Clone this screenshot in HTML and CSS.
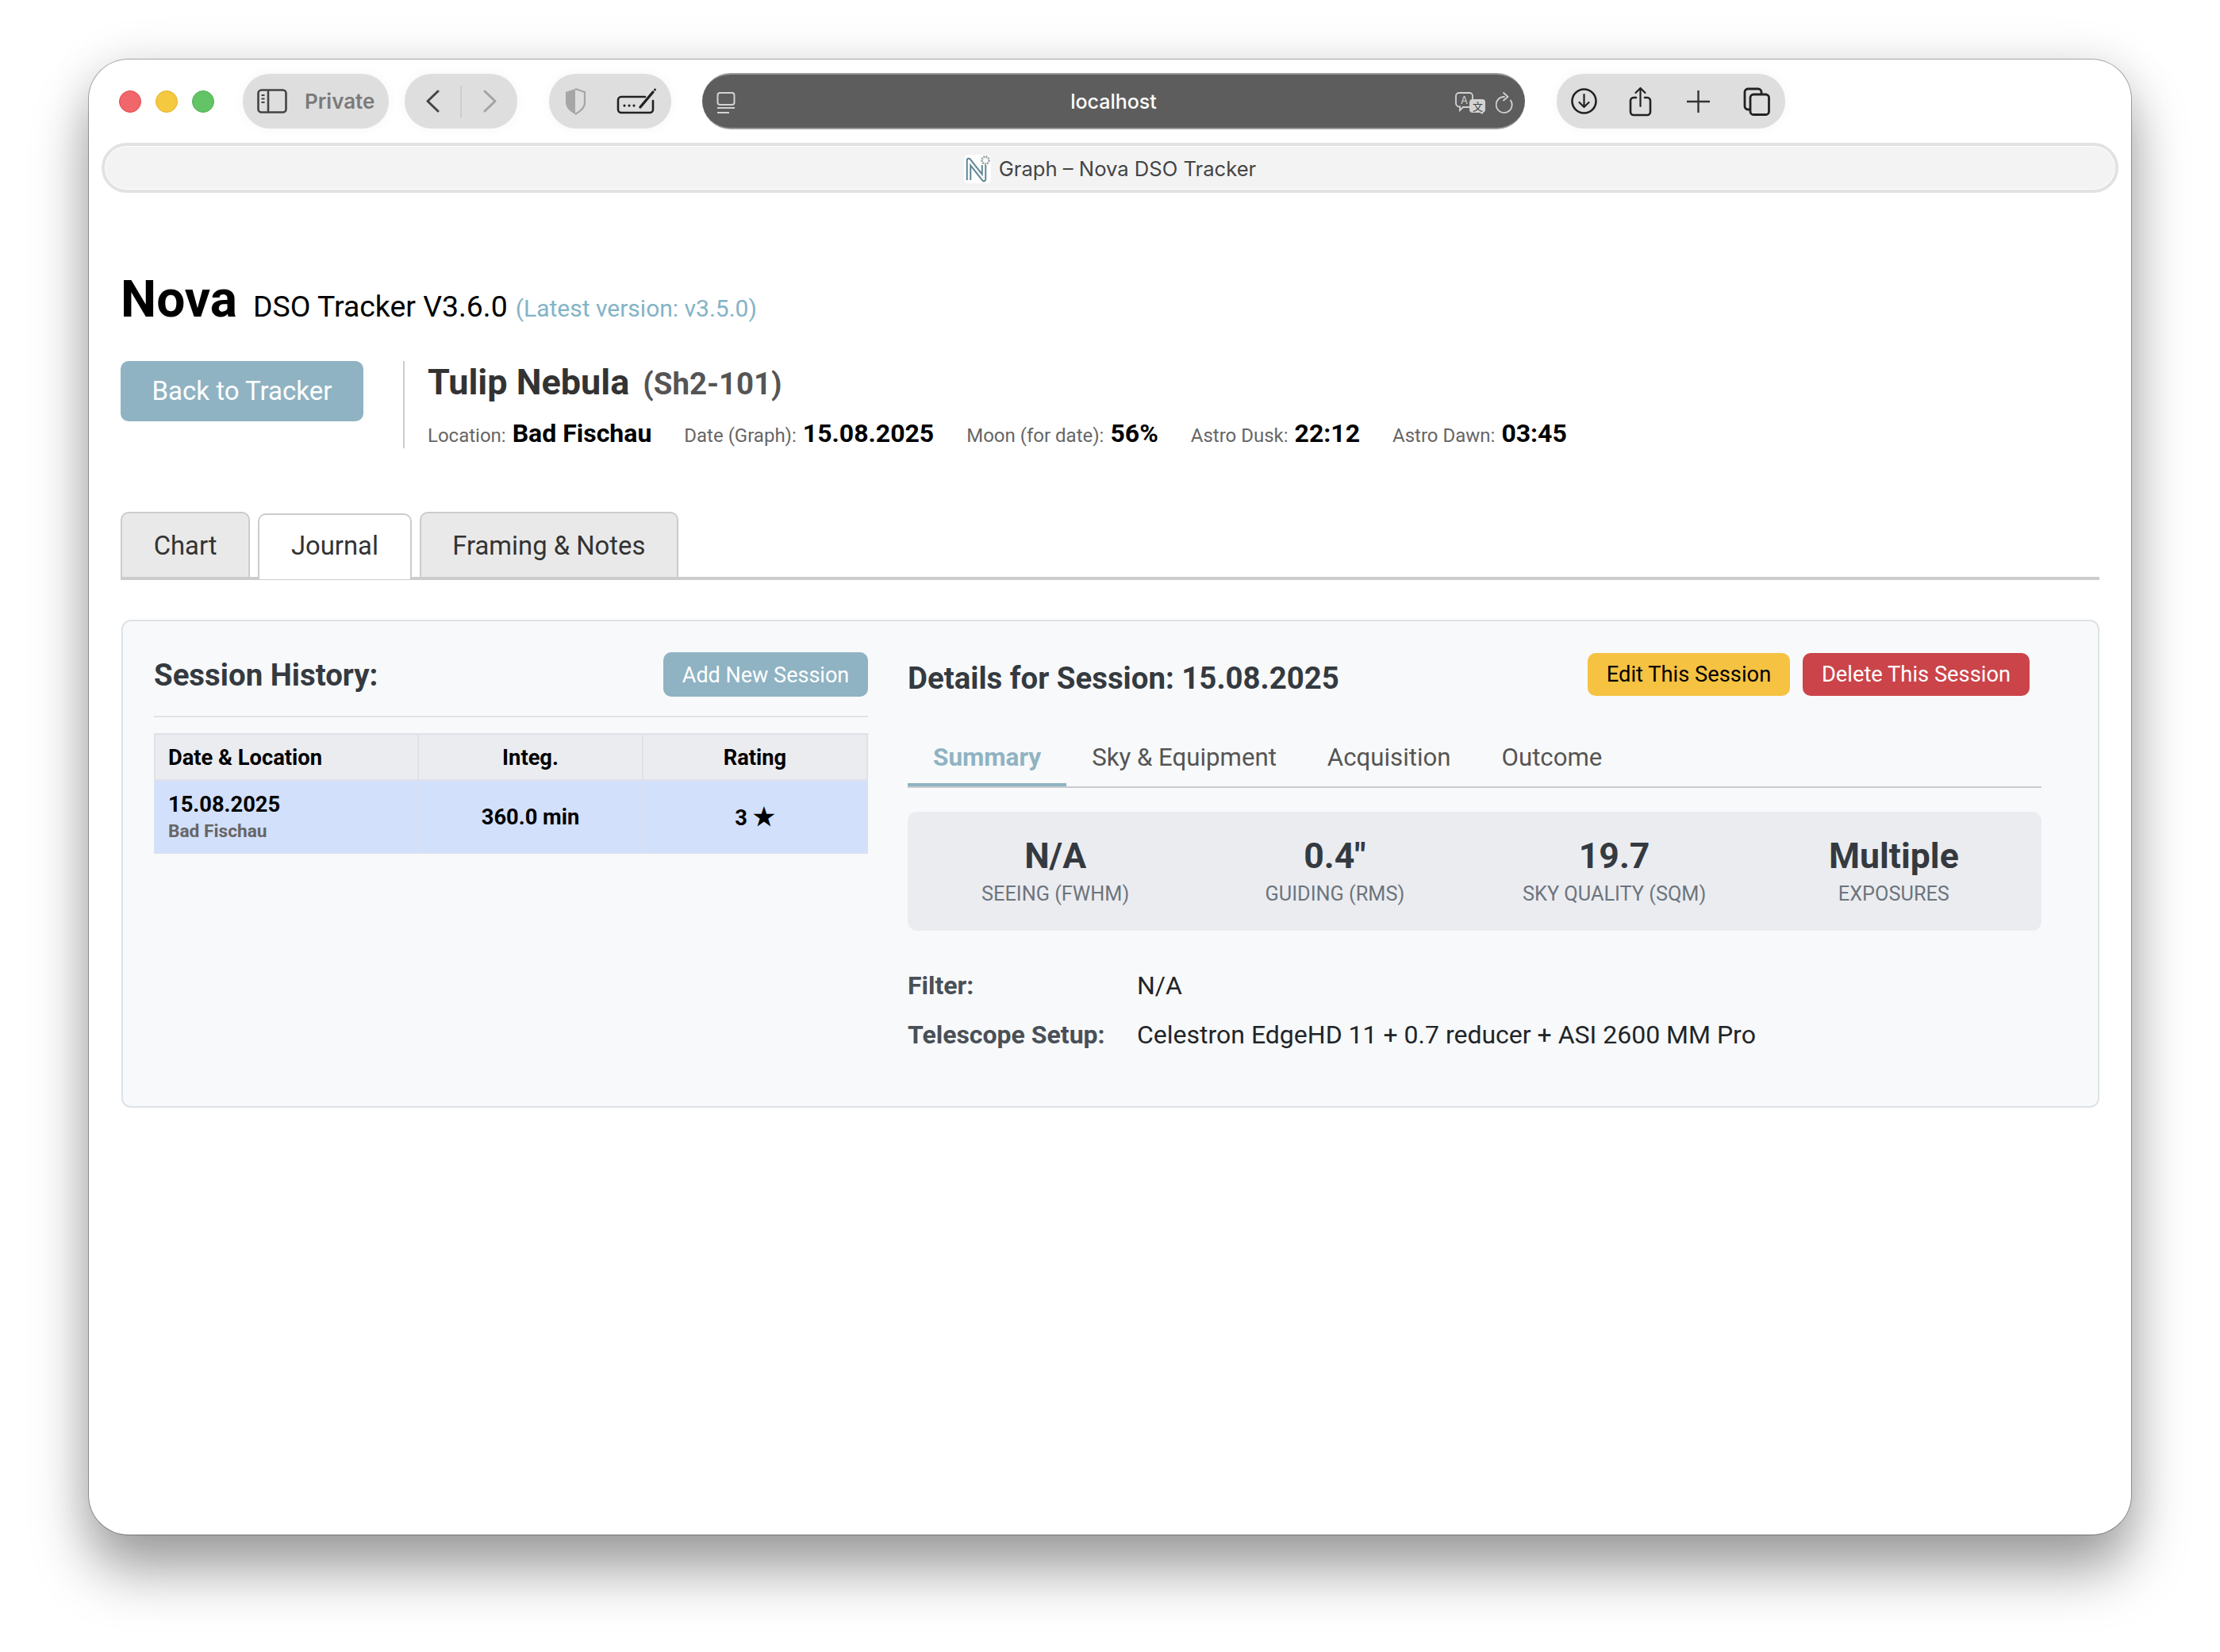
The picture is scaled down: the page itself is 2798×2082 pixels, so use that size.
FILE: index.html
```html
<!DOCTYPE html>
<html>
<head>
    <title>Graph - Nova DSO Tracker</title>
    <link rel="stylesheet" href="styles.css">
</head>
<body>
    <div class="window">
        <div class="toolbar">
            <div class="lights">
                <span class="light red"></span>
                <span class="light yellow"></span>
                <span class="light green"></span>
            </div>
            <div class="pill pill-private">
                <svg width="38" height="31" viewBox="0 0 38 31" fill="none" stroke="#444" stroke-width="2.6"><rect x="1.5" y="1.5" width="35" height="28" rx="4"/><path d="M14 2v27"/><path d="M5.500 8h4M5.500 12.500h4M5.500 17h4" stroke-width="2"/></svg>
                <span class="private-text">Private</span>
            </div>
            <div class="pill pill-nav">
                <svg width="18" height="29" viewBox="0 0 18 29" fill="none" stroke="#444" stroke-width="3" stroke-linecap="round" stroke-linejoin="round"><path d="M16 2 3 14.500 16 27"/></svg>
                <span class="nav-line"></span>
                <svg width="18" height="29" viewBox="0 0 18 29" fill="none" stroke="#a3a3a3" stroke-width="3" stroke-linecap="round" stroke-linejoin="round"><path d="M2 2l13 12.500L2 27"/></svg>
            </div>
            <div class="pill pill-tools">
                <svg width="28" height="34" viewBox="0 0 28 34"><path d="M14 1 2 5v13c0 7 5 11 12 15z" fill="#a6a6a6"/><path d="M14 1l12 4v13c0 7-5 11-12 15" fill="none" stroke="#a6a6a6" stroke-width="2.200"/></svg>
                <svg width="51" height="33" viewBox="0 0 51 33" fill="none" stroke="#222" stroke-width="2.600" stroke-linecap="round"><path d="M36 11H6a4 4 0 0 0-4 4v12a4 4 0 0 0 4 4h36a4 4 0 0 0 4-4V16"/><path d="M30 24 46 5" stroke-width="3.400"/><path d="M48.500 2v.1" stroke-width="3"/><path d="M10 22v.1M16 22v.1M22 22v.1" stroke-width="3.200"/></svg>
            </div>
            <div class="urlbar">
                <svg class="url-left" width="24" height="27" viewBox="0 0 24 27" fill="none" stroke="#d2d2d2" stroke-width="2"><rect x="1.500" y="1" width="21" height="15" rx="3"/><path d="M1 20h22" /><path d="M1 26h15"/></svg>
                <span class="url-text">localhost</span>
                <div class="url-right">
                    <svg width="39" height="28" viewBox="0 0 39 28"><path d="M5 1h13a4 4 0 0 1 4 4v10a4 4 0 0 1-4 4h-8l-4 4v-4.500A5 5 0 0 1 1 15V5a4 4 0 0 1 4-4z" fill="none" stroke="#d2d2d2" stroke-width="1.800"/><text class="glyph-a" x="7" y="15">A</text><path d="M22 9h12a4 4 0 0 1 4 4v9a4 4 0 0 1-3 4v2l-4-2h-9a4 4 0 0 1-4-4v-9a4 4 0 0 1 4-4z" fill="#d2d2d2"/><text class="glyph-b" x="22" y="23">文</text></svg>
                    <svg width="23" height="28" viewBox="0 0 23 28" fill="none" stroke="#d2d2d2" stroke-width="1.800" stroke-linecap="round" stroke-linejoin="round"><path d="M19 10.500a10 10 0 1 1-8-4.500"/><path d="M10 1l5.500 5L10 10.500"/></svg>
                </div>
            </div>
            <div class="pill pill-right">
                <svg width="33" height="33" viewBox="0 0 33 33" fill="none" stroke="#222" stroke-width="2.600" stroke-linecap="round" stroke-linejoin="round"><circle cx="16.500" cy="16.500" r="15"/><path d="M16.500 8v16M10.500 18l6 6 6-6" stroke-width="2.200"/></svg>
                <svg width="29" height="38" viewBox="0 0 29 38" fill="none" stroke="#222" stroke-width="2.600" stroke-linecap="round" stroke-linejoin="round"><path d="M9 14H6a4 4 0 0 0-4 4v14a4 4 0 0 0 4 4h17a4 4 0 0 0 4-4V18a4 4 0 0 0-4-4h-3"/><path d="M14.500 25V2M8.500 8l6-6 6 6" stroke-width="2.200"/></svg>
                <svg width="29" height="28" viewBox="0 0 29 28" fill="none" stroke="#333" stroke-width="2.400"><path d="M14.500 0v28M0 14h29"/></svg>
                <svg width="34" height="36" viewBox="0 0 34 36" fill="none" stroke="#222" stroke-width="2.800"><path d="M8 28H6a4 4 0 0 1-4-4V6a4 4 0 0 1 4-4h13a4 4 0 0 1 4 4v2"/><rect x="9" y="9" width="23.500" height="25.500" rx="4"/></svg>
            </div>
        </div>

        <div class="tabstrip">
            <svg width="34" height="36" viewBox="0 0 34 36" fill="none"><rect width="34" height="36" rx="5" fill="#fff"/><path d="M6 32V7l19 24V13" stroke="#5f8795" stroke-width="6.500" stroke-linejoin="round"/><path d="M6 32V7l19 24V13" stroke="#fff" stroke-width="2.500" stroke-linejoin="round"/><circle cx="27" cy="7" r="4.500" stroke="#9fa9ad" stroke-width="3" stroke-dasharray="2 1"/></svg>
            <span class="tab-title">Graph – Nova DSO Tracker</span>
        </div>

        <div class="content">
            <div class="site-title">
                <span class="nova">Nova</span>
                <span class="version">DSO Tracker V3.6.0</span>
                <span class="latest">(Latest version: v3.5.0)</span>
            </div>

            <div class="header-row">
                <a class="back-btn">Back to Tracker</a>
                <div class="object-info">
                    <div class="object-name">
                        <span class="name">Tulip Nebula</span>
                        <span class="desig">(Sh2-101)</span>
                    </div>
                    <div class="meta">
                        <span class="meta-item"><span class="meta-label">Location:</span><strong>Bad Fischau</strong></span>
                        <span class="meta-item"><span class="meta-label">Date (Graph):</span><strong>15.08.2025</strong></span>
                        <span class="meta-item"><span class="meta-label">Moon (for date):</span><strong>56%</strong></span>
                        <span class="meta-item"><span class="meta-label">Astro Dusk:</span><strong>22:12</strong></span>
                        <span class="meta-item"><span class="meta-label">Astro Dawn:</span><strong>03:45</strong></span>
                    </div>
                </div>
            </div>

            <div class="tabs">
                <button class="tab">Chart</button>
                <button class="tab active">Journal</button>
                <button class="tab">Framing &amp; Notes</button>
            </div>

            <div class="panel">
                <div class="history">
                    <div class="history-head">
                        <h3>Session History:</h3>
                        <a class="add-btn">Add New Session</a>
                    </div>
                    <table class="sessions">
                        <thead>
                            <tr>
                                <th class="col-date">Date &amp; Location</th>
                                <th class="col-integ">Integ.</th>
                                <th>Rating</th>
                            </tr>
                        </thead>
                        <tbody>
                            <tr>
                                <td class="col-date">15.08.2025<small>Bad Fischau</small></td>
                                <td>360.0 min</td>
                                <td>3 <span class="star">★</span></td>
                            </tr>
                        </tbody>
                    </table>
                </div>

                <div class="details">
                    <div class="details-head">
                        <h3>Details for Session: 15.08.2025</h3>
                        <div class="details-actions">
                            <a class="btn-edit">Edit This Session</a>
                            <a class="btn-delete">Delete This Session</a>
                        </div>
                    </div>
                    <div class="subtabs">
                        <span class="subtab active">Summary</span>
                        <span class="subtab">Sky &amp; Equipment</span>
                        <span class="subtab">Acquisition</span>
                        <span class="subtab">Outcome</span>
                    </div>
                    <div class="stats">
                        <div class="stat"><div class="stat-value">N/A</div><div class="stat-label">Seeing (FWHM)</div></div>
                        <div class="stat"><div class="stat-value">0.4"</div><div class="stat-label">Guiding (RMS)</div></div>
                        <div class="stat"><div class="stat-value">19.7</div><div class="stat-label">Sky Quality (SQM)</div></div>
                        <div class="stat"><div class="stat-value">Multiple</div><div class="stat-label">Exposures</div></div>
                    </div>
                    <div class="facts">
                        <div class="fact-label">Filter:</div><div>N/A</div>
                        <div class="fact-label">Telescope Setup:</div><div>Celestron EdgeHD 11 + 0.7 reducer + ASI 2600 MM Pro</div>
                    </div>
                </div>
            </div>
        </div>
    </div>
</body>
</html>
```

FILE: styles.css
```css
html, body {
    margin: 0;
    height: 100%;
    background: #fff;
    overflow: hidden;
}

body {
    font-family: Roboto, "Liberation Sans", sans-serif;
    padding: 75px 0 0 112px;
    box-sizing: border-box;
}

.window {
    width: 2574px;
    height: 1859px;
    background: #fff;
    border-radius: 50px;
    box-shadow: 0 0 0 1px rgba(0, 0, 0, 0.3), 0 46px 70px rgba(0, 0, 0, 0.36), 0 0 60px rgba(0, 0, 0, 0.1);
}

/* browser chrome */
.toolbar {
    display: flex;
    align-items: center;
    height: 69px;
    padding: 18px 0 0 38px;
}

.lights {
    display: flex;
    gap: 18px;
    margin-right: 36px;
}

.light {
    width: 28px;
    height: 28px;
    border-radius: 50%;
    box-sizing: border-box;
}

.red { background: #f1666a; border: 1px solid #e2494e; }
.yellow { background: #f4c83f; border: 1px solid #e4b42c; }
.green { background: #63c466; border: 1px solid #4cae50; }

.pill {
    display: flex;
    align-items: center;
    height: 69px;
    border-radius: 34px;
    background: #dedede;
    box-sizing: border-box;
    box-shadow: 0 0 16px rgba(0, 0, 0, 0.04);
}

.pill-private {
    width: 184px;
    padding-left: 18px;
    gap: 22px;
    margin-right: 20px;
}

.private-text {
    font-family: Inter, sans-serif;
    font-size: 26px;
    font-weight: 600;
    color: #7a7a7a;
}

.pill-nav {
    width: 142px;
    padding-left: 26px;
    margin-right: 40px;
}

.nav-line {
    width: 2px;
    height: 40px;
    background: #cdcdcd;
    margin: 0 27px 0 26px;
}

.pill-tools {
    width: 154px;
    padding-left: 19px;
    gap: 38px;
    margin-right: 39px;
}

.urlbar {
    display: flex;
    align-items: center;
    justify-content: center;
    position: relative;
    width: 1037px;
    height: 71px;
    border-radius: 36px;
    background: #5d5d5d;
    border-top: 2px solid #9a9a9a;
    border-bottom: 2px solid #9a9a9a;
    box-sizing: border-box;
    margin-right: 40px;
}

.url-left {
    position: absolute;
    left: 18px;
    top: 22px;
}

.url-text {
    font-family: Inter, sans-serif;
    font-size: 25px;
    font-weight: 500;
    color: #fff;
}

.url-right {
    position: absolute;
    right: 14px;
    top: 22px;
    display: flex;
    gap: 12px;
}

.glyph-a {
    font-family: Inter, sans-serif;
    font-size: 13px;
    fill: #d2d2d2;
}

.glyph-b {
    font-family: "Noto Sans CJK SC", sans-serif;
    font-size: 13px;
    fill: #444;
}

.pill-right {
    width: 288px;
    padding-left: 18px;
    gap: 0;
    justify-content: flex-start;
}

.pill-right svg:nth-child(1) { margin-right: 40px; }
.pill-right svg:nth-child(2) { margin-right: 44px; }
.pill-right svg:nth-child(3) { margin-right: 42px; }

.tabstrip {
    display: flex;
    align-items: center;
    justify-content: center;
    gap: 10px;
    height: 63px;
    margin: 18px 16px 0 16px;
    padding-top: 2px;
    background: #f3f3f3;
    border: 4px solid #e2e2e2;
    border-radius: 32px;
    box-sizing: border-box;
    box-shadow: inset 0 0 0 1px #fff;
}

.tab-title {
    font-family: Inter, sans-serif;
    font-size: 25.600px;
    color: #444;
}

/* page */
.content {
    padding: 0 40px;
}

.site-title {
    display: flex;
    align-items: baseline;
    margin-top: 97px;
    height: 76px;
}

.nova {
    font-size: 64px;
    font-weight: 700;
    color: #000;
    margin-right: 20px;
}

.version {
    font-size: 37.400px;
    color: #000;
    margin-right: 10px;
}

.latest {
    font-size: 30px;
    color: #83b3c6;
}

.header-row {
    display: flex;
    margin-top: 39px;
}

.back-btn {
    display: block;
    width: 306px;
    height: 76px;
    line-height: 76px;
    text-align: center;
    font-size: 33px;
    color: #fff;
    background: #8fb3c3;
    border-radius: 10px;
}

.object-info {
    height: 110px;
    margin-left: 50px;
    padding-left: 29px;
    border-left: 2px solid #ccc;
}

.object-name {
    display: flex;
    align-items: baseline;
    gap: 17px;
    height: 72px;
}

.name {
    font-size: 45px;
    font-weight: 700;
    color: #333;
}

.desig {
    font-size: 38.400px;
    font-weight: 700;
    color: #555;
}

.meta {
    display: flex;
    align-items: baseline;
    gap: 41px;
    white-space: nowrap;
}

.meta-label {
    font-size: 24px;
    color: #666;
    margin-right: 8px;
}

.meta strong {
    font-size: 32px;
    font-weight: 700;
    color: #000;
}

.tabs {
    display: flex;
    align-items: flex-end;
    gap: 10px;
    height: 82px;
    margin-top: 80px;
    border-bottom: 4px solid #ccc;
}

.tab {
    height: 82px;
    padding: 2px 39.700px 0;
    font-family: inherit;
    font-size: 32.800px;
    color: #333;
    background: #e9e9e9;
    border: 2px solid #ccc;
    border-bottom: none;
    border-radius: 10px 10px 0 0;
}

.tab.active {
    height: 83px;
    padding-top: 0;
    padding-bottom: 3px;
    margin-bottom: -3px;
    background: #fff;
}

.panel {
    display: grid;
    grid-template-columns: 900px 1429px;
    gap: 50px;
    height: 615px;
    margin: 50px 0 0 1px;
    padding: 39px 70px 0 39px;
    background: #f8f9fa;
    border: 2px solid #dee2e6;
    border-radius: 12px;
    box-sizing: border-box;
}

h3 {
    margin: 0;
    font-size: 38.400px;
    font-weight: 700;
    color: #343a40;
}

.history-head {
    display: flex;
    justify-content: space-between;
    align-items: center;
    height: 56px;
    padding-bottom: 24px;
    border-bottom: 2px solid #dee2e6;
}

.add-btn {
    width: 258px;
    height: 56px;
    line-height: 58px;
    text-align: center;
    font-size: 27px;
    color: #fff;
    background: #8fb3c3;
    border-radius: 10px;
}

.sessions {
    width: 100%;
    margin-top: 20px;
    border-collapse: collapse;
    font-size: 27.300px;
    color: #000;
    table-layout: fixed;
}

.sessions th {
    height: 54px;
    padding: 2px 16px 0;
    background: #ebecf0;
    border: 2px solid #dfe1e8;
    font-weight: 700;
}

.sessions td {
    height: 88px;
    padding: 2px 16px 0;
    background: #d3e0fb;
    border: 2px solid #d9e0f4;
    font-weight: 700;
    text-align: center;
}

.sessions .col-date {
    width: 298px;
    text-align: left;
}

.sessions td.col-date {
    padding-top: 0;
}

.sessions .col-integ {
    width: 249px;
}

.sessions small {
    display: block;
    margin-top: 4px;
    font-size: 22.700px;
    font-weight: 700;
    color: #666;
}

.star {
    font-size: 1.150em;
    line-height: 1;
}

.details h3 {
    padding-top: 8px;
}

.details-head {
    display: flex;
    justify-content: space-between;
    align-items: center;
    height: 56px;
}

.details-actions {
    display: flex;
    gap: 16px;
    margin-right: 15px;
}

.btn-edit, .btn-delete {
    height: 54px;
    line-height: 54px;
    text-align: center;
    font-size: 27.300px;
    border-radius: 10px;
}

.btn-edit {
    width: 255px;
    background: #f5c242;
    color: #000;
}

.btn-delete {
    width: 286px;
    background: #cb444a;
    color: #fff;
}

.subtabs {
    display: flex;
    height: 91px;
    margin-top: 22px;
    border-bottom: 2px solid #cacbd0;
}

.subtab {
    padding: 0 32px;
    line-height: 109px;
    font-size: 31.200px;
    color: #555;
}

.subtab.active {
    font-size: 31.500px;
    font-weight: 700;
    color: #8fb3c3;
    height: 87px;
    border-bottom: 4px solid #8fb3c3;
}

.stats {
    display: grid;
    grid-template-columns: repeat(4, 1fr);
    height: 150px;
    margin-top: 30px;
    padding: 0 10px;
    background: #ebecf0;
    border-radius: 12px;
    box-sizing: border-box;
    text-align: center;
}

.stat-value {
    margin-top: 30px;
    font-size: 44.600px;
    font-weight: 700;
    color: #343a40;
}

.stat-label {
    margin-top: 7px;
    font-size: 25.300px;
    color: #6c757d;
    text-transform: uppercase;
}

.facts {
    display: grid;
    grid-template-columns: 289px 1fr;
    row-gap: 24px;
    margin-top: 50px;
    font-size: 32px;
    color: #212529;
}

.fact-label {
    font-weight: 700;
    color: #495057;
}
```
